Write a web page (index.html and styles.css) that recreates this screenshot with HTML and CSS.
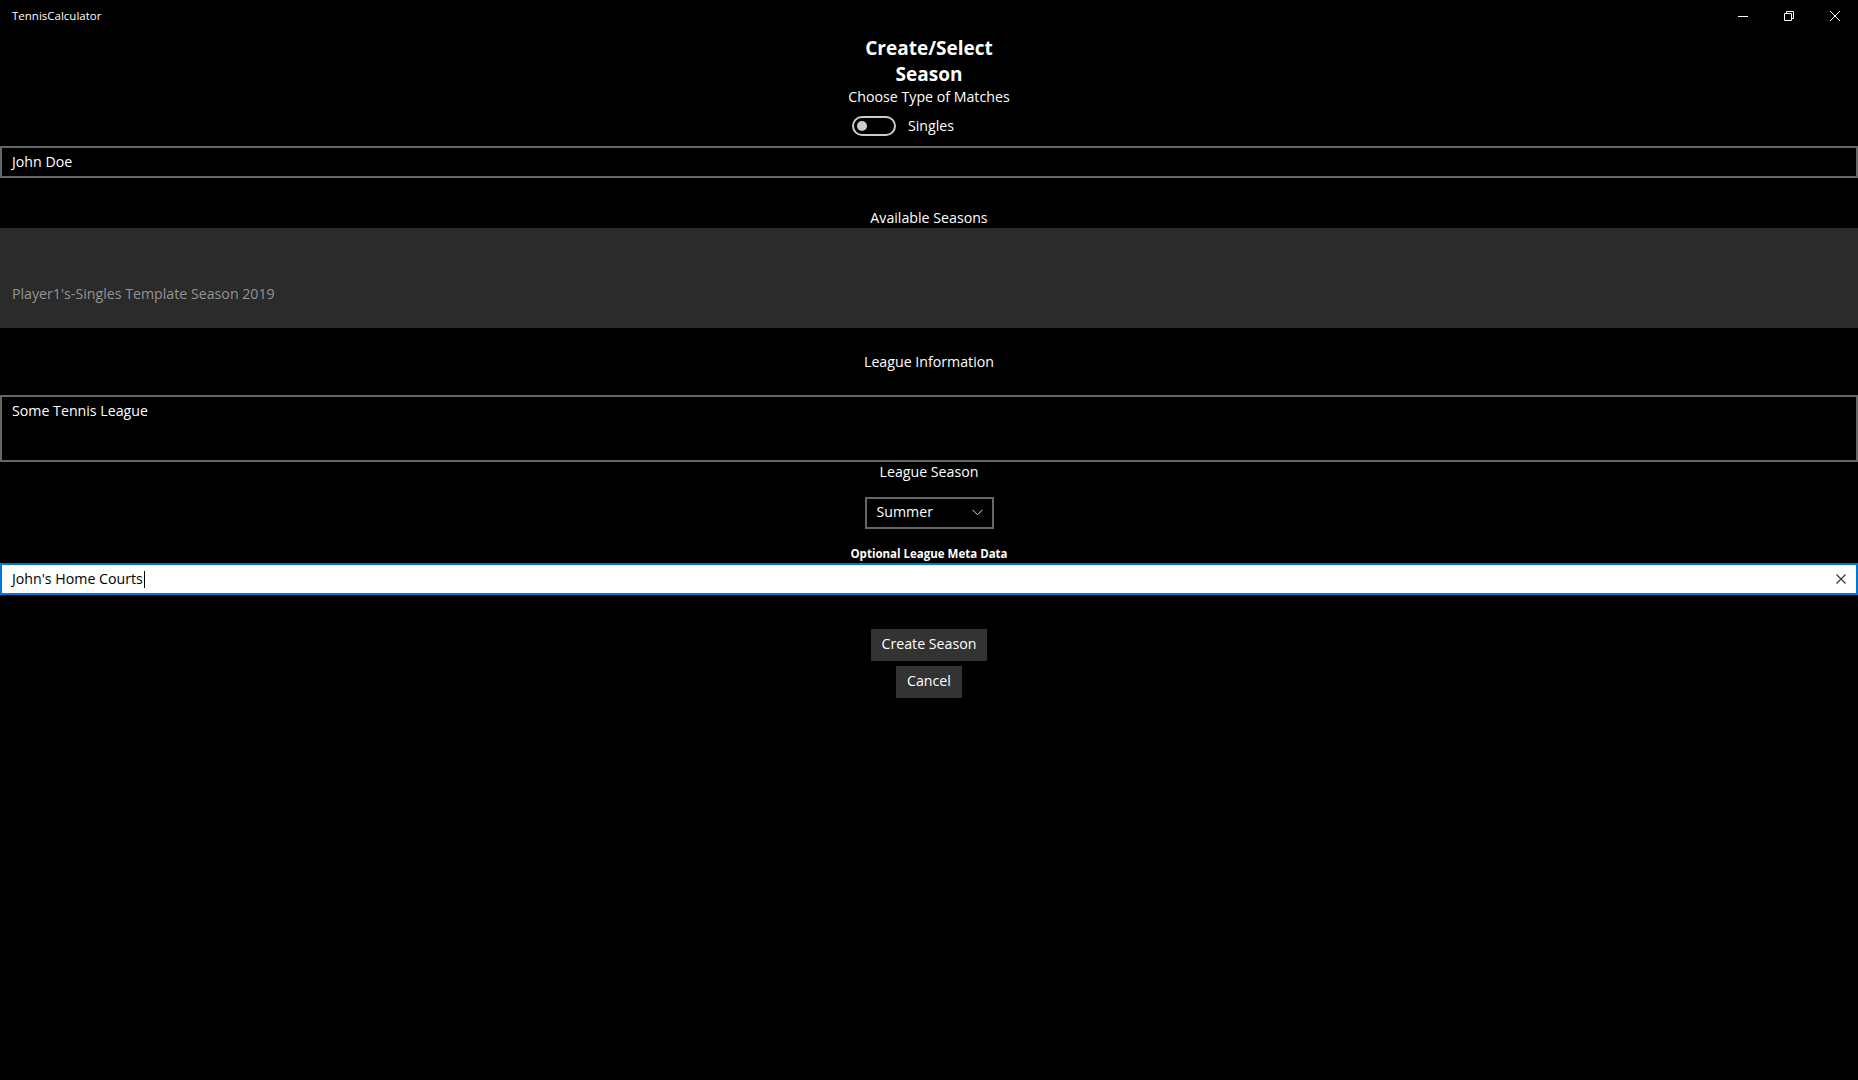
FILE: index.html
```html
<!DOCTYPE html>
<html lang="en">
<head>
<meta charset="utf-8">
<title>TennisCalculator</title>
<link rel="stylesheet" href="styles.css">
</head>
<body>
  <header class="titlebar">
    <span class="app-name">TennisCalculator</span>
    <div class="caption-buttons">
      <button class="caption-btn" aria-label="Minimize">
        <svg width="10" height="10" viewBox="0 0 10 10"><path d="M0 5.5h10" stroke="#fff" stroke-width="1" fill="none"/></svg>
      </button>
      <button class="caption-btn" aria-label="Restore">
        <svg width="10" height="10" viewBox="0 0 10 10"><path d="M0.5 2.5h7v7h-7z M2.5 2.5v-2h7v7h-2" stroke="#fff" stroke-width="1" fill="none"/></svg>
      </button>
      <button class="caption-btn" aria-label="Close">
        <svg width="10" height="10" viewBox="0 0 10 10"><path d="M0 0L10 10M10 0L0 10" stroke="#fff" stroke-width="1" fill="none"/></svg>
      </button>
    </div>
  </header>

  <main class="page">
    <h1 class="page-title">Create/Select Season</h1>
    <div class="label">Choose Type of Matches</div>

    <div class="toggle-row">
      <span class="toggle"><span class="toggle-knob"></span></span>
      <span class="toggle-text">Singles</span>
    </div>

    <div class="textbox textbox-player">John Doe</div>

    <div class="label label-seasons">Available Seasons</div>
    <div class="season-list">
      <div class="season-item">Player1's-Singles Template Season 2019</div>
    </div>

    <div class="label label-league">League Information</div>
    <div class="textbox textbox-multi">Some Tennis League</div>

    <div class="label">League Season</div>
    <div class="combo">
      <span class="combo-value">Summer</span>
      <svg class="combo-chevron" width="11" height="7" viewBox="0 0 11 7"><path d="M0.5 0.8L5.5 5.8L10.5 0.8" stroke="#ddd" stroke-width="1" fill="none"/></svg>
    </div>

    <div class="label-small">Optional League Meta Data</div>
    <div class="textbox textbox-focused">
      <span class="typed">John's Home Courts<span class="caret"></span></span>
      <svg class="clear-btn" width="10" height="10" viewBox="0 0 10 10"><path d="M0.5 0.5L9.5 9.5M9.5 0.5L0.5 9.5" stroke="#333" stroke-width="1.1" fill="none"/></svg>
    </div>

    <div class="actions">
      <button class="btn">Create Season</button>
      <button class="btn">Cancel</button>
    </div>
  </main>
</body>
</html>
```

FILE: styles.css
```css
* {
  box-sizing: border-box;
}

html, body {
  margin: 0;
  background: #000;
  color: #fff;
  font-family: "Open Sans", "Noto Sans", sans-serif;
  font-size: 14.2px;
}

/* window title bar */
.titlebar {
  height: 32px;
  display: flex;
  align-items: center;
  justify-content: space-between;
}

.app-name {
  font-size: 11.5px;
  padding-left: 12px;
  margin-top: -2px;
}

.caption-buttons {
  display: flex;
  align-self: flex-start;
}

.caption-btn {
  width: 46px;
  height: 32px;
  border: 0;
  padding: 0;
  background: transparent;
  display: flex;
  align-items: center;
  justify-content: center;
  padding-bottom: 1px;
}

/* page content */
.page {
  display: flex;
  flex-direction: column;
  align-items: center;
}

.page-title {
  width: 160px;
  margin: 0;
  padding-top: 3px;
  font-size: 19px;
  font-weight: 700;
  line-height: 26px;
  text-align: center;
}

.label {
  line-height: 20px;
}

/* toggle switch keeps its fixed control width, content left-aligned */
.toggle-row {
  margin-top: 9px;
  width: 154px;
  height: 20px;
  display: flex;
  align-items: center;
  gap: 12px;
}

.toggle {
  width: 44px;
  height: 20px;
  border: 2px solid #ccc;
  border-radius: 10px;
  display: flex;
  align-items: center;
  padding-left: 3px;
}

.toggle-knob {
  width: 10px;
  height: 10px;
  border-radius: 50%;
  background: #ccc;
}

.toggle-text {
  line-height: 20px;
}

.textbox {
  align-self: stretch;
  border: 2px solid #666;
  padding: 4px 6px 4px 10px;
  line-height: 20px;
  min-height: 32px;
}

.textbox-player {
  margin-top: 10px;
}

.label-seasons {
  margin-top: 30px;
}

.season-list {
  align-self: stretch;
  margin-top: 0;
  height: 100px;
  background: #2b2b2b;
  padding: 56px 12px 0;
}

.season-item {
  color: #939393;
  line-height: 20px;
}

.label-league {
  margin-top: 24px;
}

.textbox-multi {
  margin-top: 23px;
  min-height: 67px;
}

.combo {
  margin-top: 15px;
  width: 129px;
  height: 32px;
  border: 2px solid #666;
  display: flex;
  align-items: center;
  justify-content: space-between;
  padding: 0 9px 2px 10px;
}

.combo-value {
  line-height: 20px;
}

.label-small {
  margin-top: 17px;
  font-size: 11.5px;
  font-weight: 700;
  line-height: 16px;
}

.textbox-focused {
  margin-top: 1px;
  background: #fff;
  color: #000;
  border-color: #0078d7;
  display: flex;
  align-items: center;
  justify-content: space-between;
  padding-right: 10px;
}

.typed {
  display: inline-flex;
  align-items: center;
}

.caret {
  display: inline-block;
  width: 1px;
  height: 17px;
  background: #000;
  margin-left: 1px;
}

.clear-btn {
  flex: none;
}

.actions {
  margin-top: 34px;
  display: flex;
  flex-direction: column;
  align-items: center;
  gap: 5px;
}

.btn {
  height: 32px;
  border: 0;
  background: #333;
  color: #fff;
  font: inherit;
  line-height: 20px;
  padding: 4px 11px 6px;
}
```
